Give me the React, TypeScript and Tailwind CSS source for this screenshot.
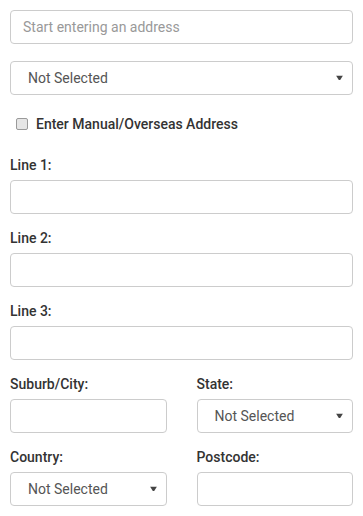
import React from 'react';

const font = { fontFamily: 'Roboto, "Liberation Sans", Arial, sans-serif' };

function Arrow() {
  return (
    <svg
      className="pointer-events-none absolute right-[10px] top-1/2 -translate-y-1/2"
      width="7"
      height="5"
      viewBox="0 0 7 5"
    >
      <path d="M0 0 H7 L4.2 4.6 H2.8 Z" fill="#444" />
    </svg>
  );
}

function Label({ children }: { children: React.ReactNode }) {
  return (
    <label className="mb-[5px] block pt-[1px] text-[14px] leading-[19px] font-medium text-[#333]">
      {children}
    </label>
  );
}

function TextInput({ placeholder }: { placeholder?: string }) {
  return (
    <input
      type="text"
      placeholder={placeholder}
      className="block h-[34px] w-full rounded-[4px] border border-[#ccc] bg-white px-[12px] text-[14px] text-[#555] placeholder:text-[#999] outline-none"
      style={font}
    />
  );
}

function Select() {
  return (
    <div className="relative">
      <select
        className="block h-[34px] w-full appearance-none rounded-[4px] border border-[#ccc] bg-white pl-[17px] pr-[24px] text-[14px] text-[#555] outline-none"
        style={font}
        defaultValue=""
      >
        <option value="">Not Selected</option>
      </select>
      <Arrow />
    </div>
  );
}

export default function App() {
  return (
    <div className="min-h-[516px] w-[363px] bg-white px-[10px] pt-[10px]" style={font}>
      <TextInput placeholder="Start entering an address" />

      <div className="mt-[17px]">
        <Select />
      </div>

      <label className="mt-[19px] flex h-[20px] items-center gap-[8px] pl-[6px]">
        <span className="h-[12px] w-[12px] rounded-[2px] border border-[#9a9a9a] bg-[#e6e6e6]" />
        <span className="text-[14px] leading-[20px] font-medium text-[#333]">
          Enter Manual/Overseas Address
        </span>
      </label>

      <div className="mt-[21px] flex flex-col gap-[14px]">
        <div>
          <Label>Line 1:</Label>
          <TextInput />
        </div>
        <div>
          <Label>Line 2:</Label>
          <TextInput />
        </div>
        <div>
          <Label>Line 3:</Label>
          <TextInput />
        </div>
        <div className="grid grid-cols-2 gap-x-[30px] gap-y-[14px]">
          <div>
            <Label>Suburb/City:</Label>
            <TextInput />
          </div>
          <div>
            <Label>State:</Label>
            <Select />
          </div>
          <div>
            <Label>Country:</Label>
            <Select />
          </div>
          <div>
            <Label>Postcode:</Label>
            <TextInput />
          </div>
        </div>
      </div>
    </div>
  );
}
